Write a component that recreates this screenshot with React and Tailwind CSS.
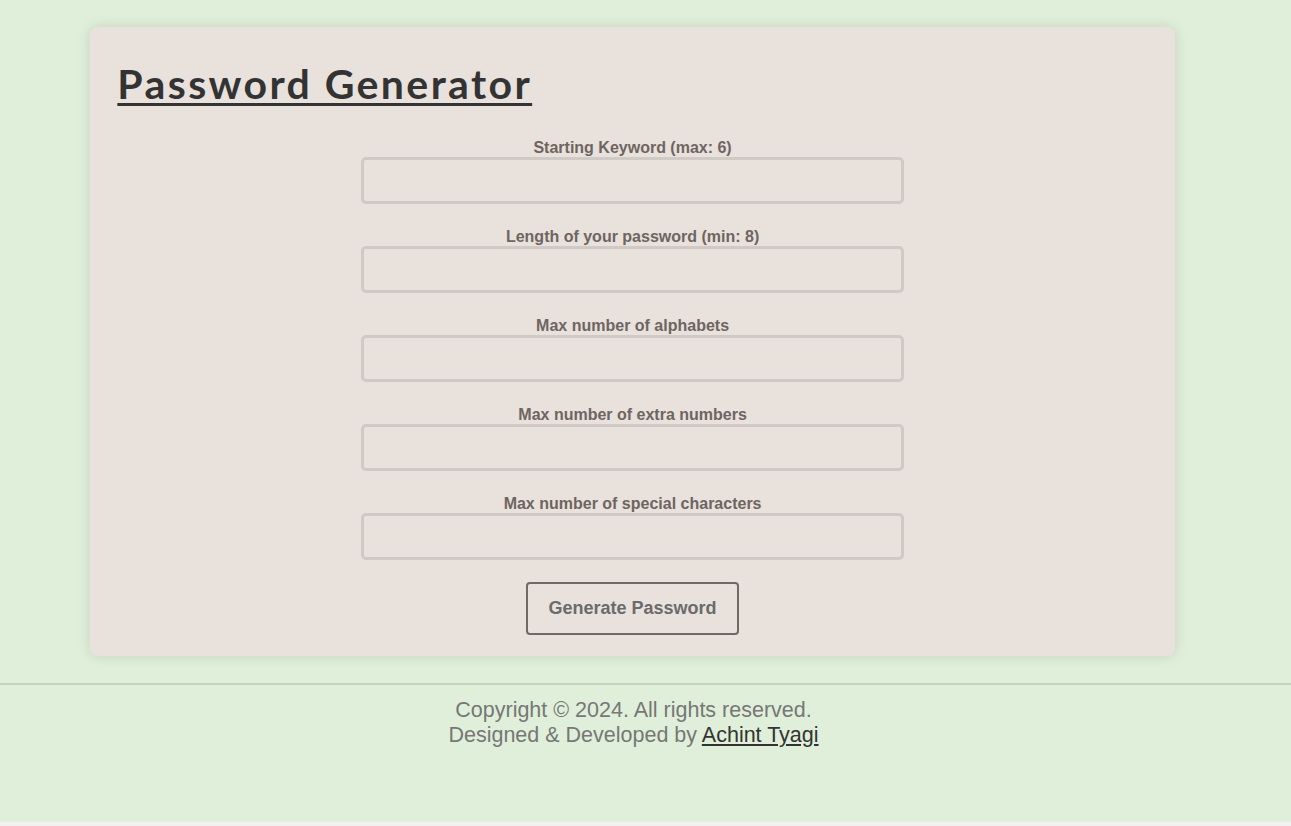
import React from "react";

const fields = [
  "Starting Keyword (max: 6)",
  "Length of your password (min: 8)",
  "Max number of alphabets",
  "Max number of extra numbers",
  "Max number of special characters",
];

export default function App() {
  return (
    <div className="min-h-screen bg-[#f1f1f1]">
      <div className="h-[822px] bg-[#e0efd9] pt-[27px]">
        <div className="ml-[7%] w-[84%] rounded-lg bg-[#e8e1dc] px-[27px] pb-[21px] pt-[33px] shadow-[0_0_14px_rgba(0,0,0,0.12)]">
          <h1 className="font-['Lato',sans-serif] text-[41px] font-bold leading-[48px] tracking-[2.4px] text-[#333] underline decoration-[3px] underline-offset-[4px]">
            Password Generator
          </h1>
          <div className="mt-[30px] flex flex-col items-center">
            {fields.map((label) => (
              <div key={label} className="mb-[23px] flex w-[543px] flex-col items-center">
                <label className="font-['Liberation_Sans',sans-serif] text-[16px] font-bold leading-[19px] text-[#6e6561]">
                  {label}
                </label>
                <input
                  type="text"
                  className="h-[47px] w-full rounded-[5px] border-[3px] border-[#cfcac6] bg-transparent px-2 outline-none"
                />
              </div>
            ))}
            <button className="-mt-[1px] h-[53px] w-[213px] rounded-[4px] border-2 border-[#6e6a66] font-['Liberation_Sans',sans-serif] text-[18px] font-bold text-[#6b6b6b]">
              Generate Password
            </button>
          </div>
        </div>
        <div className="mt-[27px] border-t-2 border-[#c7d3c2] pr-[24px] pt-[13px] text-center font-['Liberation_Sans',sans-serif] text-[21.5px] leading-[25px] text-[#777]">
          <p>Copyright © 2024. All rights reserved.</p>
          <p>
            Designed &amp; Developed by{" "}
            <a href="#" className="text-[#333] underline">
              Achint Tyagi
            </a>
          </p>
        </div>
      </div>
    </div>
  );
}
